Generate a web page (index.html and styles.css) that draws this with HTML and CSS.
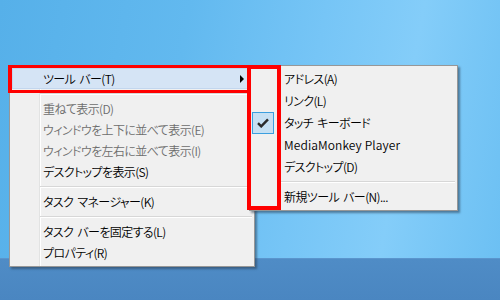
FILE: index.html
```html
<!DOCTYPE html>
<html lang="ja">
<head>
<meta charset="utf-8">
<link rel="stylesheet" href="styles.css">
</head>
<body>
<div class="screen">
  <div class="desktop">
    <div class="menu main-menu">
      <div class="item hot"><span>ツール バー(T)</span><span class="arrow"></span></div>
      <div class="sep"></div>
      <div class="item disabled">重ねて表示(D)</div>
      <div class="item disabled">ウィンドウを上下に並べて表示(E)</div>
      <div class="item disabled">ウィンドウを左右に並べて表示(I)</div>
      <div class="item">デスクトップを表示(S)</div>
      <div class="sep"></div>
      <div class="item">タスク マネージャー(K)</div>
      <div class="sep"></div>
      <div class="item">タスク バーを固定する(L)</div>
      <div class="item">プロパティ(R)</div>
    </div>
    <div class="menu sub-menu">
      <div class="item">アドレス(A)</div>
      <div class="item">リンク(L)</div>
      <div class="item checked"><span class="check"><svg width="12" height="10" viewBox="0 0 12 10"><path d="M1 5.2 L4.2 8.4 L11 1.4" fill="none" stroke="#2b2b2b" stroke-width="2.4"/></svg></span>タッチ キーボード</div>
      <div class="item latin">MediaMonkey Player</div>
      <div class="item">デスクトップ(D)</div>
      <div class="sep"></div>
      <div class="item">新規ツール バー(N)...</div>
    </div>
    <div class="mark mark-toolbar"></div>
    <div class="mark mark-check"></div>
  </div>
  <div class="taskbar"></div>
</div>
</body>
</html>
```
FILE: styles.css
```css
* { box-sizing: border-box; }
html, body { margin: 0; padding: 0; }
body {
  width: 500px;
  height: 300px;
  overflow: hidden;
  font-family: "Noto Sans CJK JP", "Noto Sans", sans-serif;
  font-size: 12px;
  font-weight: 350;
  font-feature-settings: "palt";
}
.screen {
  width: 500px;
  height: 300px;
  display: flex;
  flex-direction: column;
}
.desktop {
  position: relative;
  flex: 1;
  background: linear-gradient(100deg, #56b0e9 0%, #62b9ef 35%, #76c5f6 60%, #84cdf9 78%, #6cc0f3 100%);
}
.taskbar {
  height: 42px;
  background: linear-gradient(180deg, #4f8cc6 0%, #4a86c1 100%);
  border-top: 1px solid #5a95cd;
}
.menu {
  position: absolute;
  background-color: #f0f0f0;
  border: 1px solid #979797;
  padding: 2px;
  box-shadow: 2px 2px 2px rgba(40, 60, 80, 0.55);
}
.main-menu {
  left: 9px;
  top: 65px;
  width: 246px;
  height: 202px;
  background-image: linear-gradient(to right, transparent 29px, #e2e3e3 29px, #e2e3e3 30px, #ffffff 30px, #ffffff 31px, transparent 31px);
}
.sub-menu {
  left: 249px;
  top: 65px;
  width: 209px;
  height: 146px;
  background-image: linear-gradient(to right, transparent 29px, #e2e3e3 29px, #e2e3e3 30px, #ffffff 30px, #ffffff 31px, transparent 31px);
}
.item {
  display: flex;
  align-items: center;
  height: 21px;
  padding-left: 31px;
  padding-right: 8px;
  color: #000;
  white-space: pre;
  line-height: 1;
  letter-spacing: -0.6px;
  word-spacing: 2px;
}
.sub-menu .item {
  height: 22px;
  padding-left: 32px;
  position: relative;
}
.sub-menu .item.latin { letter-spacing: 0.1px; word-spacing: 0; }
.item.disabled { color: #6d6d6d; }
.item.hot {
  background: #d5e4f5;
  border: 1px solid #c2d6ee;
  padding-left: 30px;
  padding-right: 7px;
  justify-content: space-between;
}
.arrow {
  width: 0;
  height: 0;
  border-top: 4px solid transparent;
  border-bottom: 4px solid transparent;
  border-left: 4px solid #000;
}
.check {
  position: absolute;
  left: 0;
  top: 0;
  width: 22px;
  height: 22px;
  background: #c6e0f3;
  border: 1px solid #3c9fdf;
  display: flex;
  align-items: center;
  justify-content: center;
}
.sep {
  height: 9px;
  margin-left: 28px;
  display: flex;
  flex-direction: column;
  justify-content: center;
}
.sep::before {
  content: "";
  display: block;
  height: 1px;
  background: #d7d7d7;
}
.sep::after {
  content: "";
  display: block;
  height: 1px;
  background: #ffffff;
}
.sub-menu .sep { height: 8px; }
.mark {
  position: absolute;
  border: 4px solid #ff0000;
}
.mark-toolbar {
  left: 8px;
  top: 65px;
  width: 243px;
  height: 28px;
  border-width: 3px 4px;
}
.mark-check {
  left: 247px;
  top: 65px;
  width: 34px;
  height: 145px;
}
```
